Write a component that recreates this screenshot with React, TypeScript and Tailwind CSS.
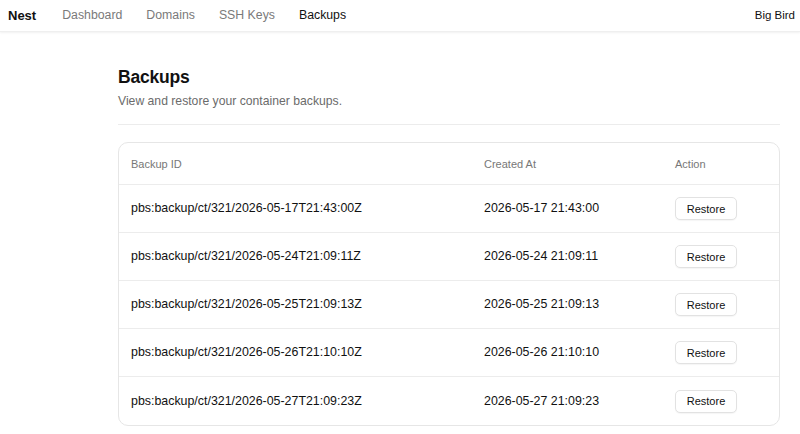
const backups = [
  { id: "pbs:backup/ct/321/2026-05-17T21:43:00Z", created: "2026-05-17 21:43:00" },
  { id: "pbs:backup/ct/321/2026-05-24T21:09:11Z", created: "2026-05-24 21:09:11" },
  { id: "pbs:backup/ct/321/2026-05-25T21:09:13Z", created: "2026-05-25 21:09:13" },
  { id: "pbs:backup/ct/321/2026-05-26T21:10:10Z", created: "2026-05-26 21:10:10" },
  { id: "pbs:backup/ct/321/2026-05-27T21:09:23Z", created: "2026-05-27 21:09:23" },
];

const nav = ["Dashboard", "Domains", "SSH Keys", "Backups"];

export default function App() {
  return (
    <div className="min-h-screen bg-white text-[#111] font-['Liberation_Sans',Arial,sans-serif]">
      {/* top bar */}
      <header className="flex h-8 items-center justify-between pl-2 pr-[5px] shadow-[0_1px_2px_rgba(0,0,0,0.06)] border-b border-[#efefef]">
        <div className="flex items-center">
          <span className="text-[13px] font-bold text-[#111]">Nest</span>
          <nav className="ml-[26px] flex items-center gap-[24px]">
            {nav.map((n) => (
              <span
                key={n}
                className={n === "Backups" ? "text-[12.3px] text-[#111]" : "text-[12.3px] text-[#7a7a7a]"}
              >
                {n}
              </span>
            ))}
          </nav>
        </div>
        <span className="text-[11.5px] font-medium text-[#111]">Big Bird</span>
      </header>

      <main className="pl-[118px] pr-[20px] pt-[33px]">
        <h1 className="text-[17.5px] font-bold leading-6 tracking-[-0.2px]">Backups</h1>
        <p className="mt-[3px] text-[12.2px] text-[#6b6b6b]">View and restore your container backups.</p>
        <div className="mt-[14px] border-t border-[#ececec]" />

        <div className="mt-[17px] overflow-hidden rounded-[10px] border border-[#e6e6e6]">
          <div className="grid h-[42px] grid-cols-[353px_191px_1fr] items-center border-b border-[#ececec] pl-[12px] text-[11px] text-[#777]">
            <span>Backup ID</span>
            <span>Created At</span>
            <span>Action</span>
          </div>
          {backups.map((b, i) => (
            <div
              key={b.id}
              className={
                "grid h-[48px] grid-cols-[353px_191px_1fr] items-center pl-[12px] text-[12.4px] text-[#111] " +
                (i < backups.length - 1 ? "border-b border-[#ececec]" : "")
              }
            >
              <span>{b.id}</span>
              <span>{b.created}</span>
              <span>
                <button className="h-[23px] w-[62px] rounded-[5px] border border-[#e2e2e2] bg-white text-[11px] font-medium text-[#111] shadow-[0_1px_1px_rgba(0,0,0,0.04)]">
                  Restore
                </button>
              </span>
            </div>
          ))}
        </div>
      </main>
    </div>
  );
}
